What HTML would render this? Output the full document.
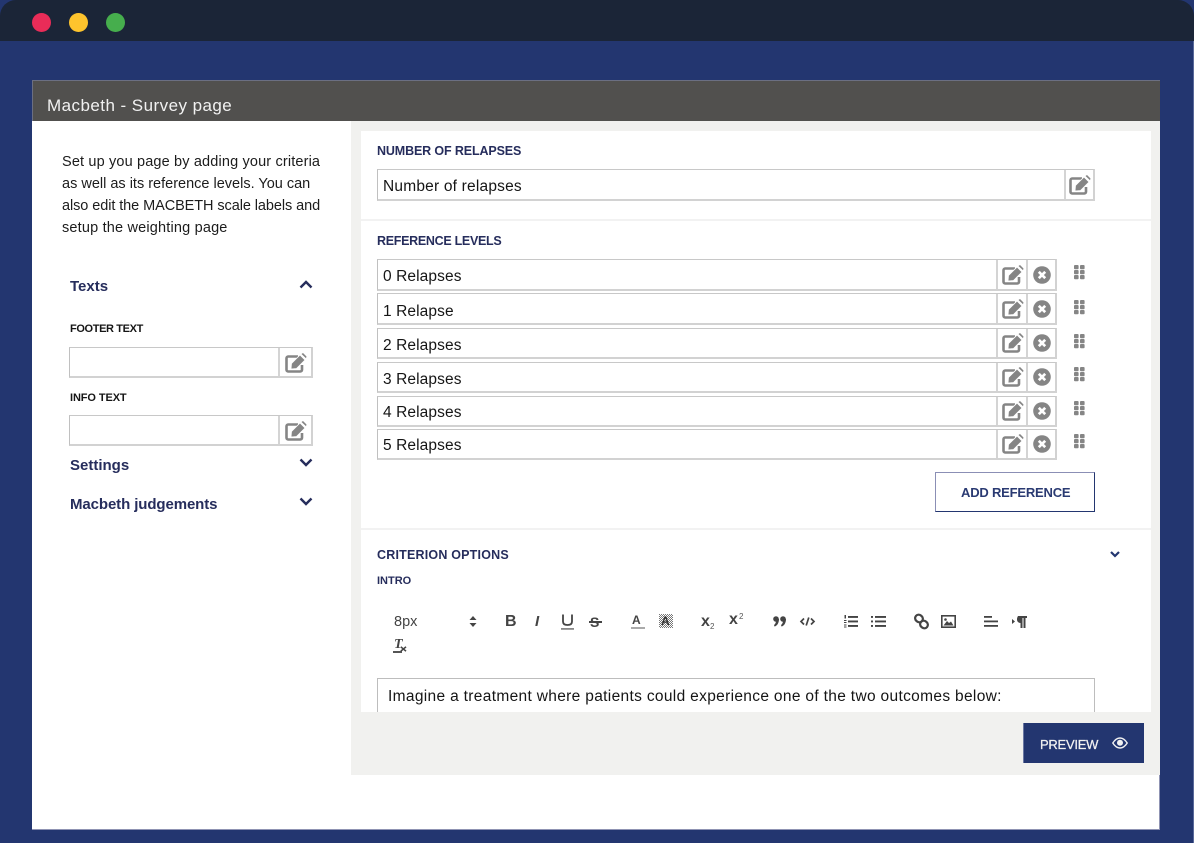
<!DOCTYPE html>
<html><head><meta charset="utf-8">
<style>
html,body{margin:0;padding:0;background:#fff}
#p{position:relative;width:1194px;height:843px;overflow:hidden;font-family:"Liberation Sans",sans-serif;background:#fff}
.a,.t{position:absolute}
.t{white-space:nowrap;line-height:20px}
.body{font-size:15.5px;letter-spacing:.1px;color:#151515}
.side{font-size:14.5px;color:#1c1c1c}
.head{font-size:12.5px;font-weight:bold;color:#262d5c}
.lab{font-size:11px;font-weight:bold;color:#151515}
.acc{font-size:15px;font-weight:bold;letter-spacing:0;color:#262d5c}
.box{position:absolute;box-sizing:border-box;border:solid #d2d2d2;border-width:1px 2px 2px 1px;border-top-color:#c8c8c8;border-left-color:#c0c0c0;background:#fff}
.sep{position:absolute;top:0;bottom:0;width:1.5px;background:#d4d4d4}
svg{position:absolute;overflow:visible}
</style></head><body><div id="p">
<svg width="0" height="0" style="position:absolute"><defs>
<g id="pen"><path d="M13 3.500H3.200A1.700 1.700 0 0 0 1.500 5.200V16.800A1.700 1.700 0 0 0 3.200 18.500H15.300A1.700 1.700 0 0 0 17 16.800V12" fill="none" stroke="#858585" stroke-width="2.600"/><path d="M6.500 10.500 15 2 20 7 11.500 15.500 6 16Z" fill="#858585" stroke="#fff" stroke-width=".8"/><path d="M16.500 1 18 0 21.500 3.500 21 5.300Z" fill="#858585"/></g>
<g id="x"><circle cx="9" cy="9" r="8.800" fill="#858585"/><path d="M5.800 5.800 12.200 12.200M12.200 5.800 5.800 12.200" stroke="#fff" stroke-width="2.700"/></g>
<g id="dots" fill="#858585"><rect x="0" y="0" width="4.600" height="4.300" rx="1"/><rect x="6" y="0" width="4.600" height="4.300" rx="1"/><rect x="0" y="5" width="4.600" height="4.300" rx="1"/><rect x="6" y="5" width="4.600" height="4.300" rx="1"/><rect x="0" y="10" width="4.600" height="4.300" rx="1"/><rect x="6" y="10" width="4.600" height="4.300" rx="1"/></g>
</defs></svg>

<div class="a" style="left:0;top:0;width:1194px;height:843px;background:#233670"></div>
<div class="a" style="left:1193px;top:41px;width:1px;height:802px;background:#5a6a9a"></div>
<div class="a" style="left:0;top:0;width:1194px;height:41px;background:#1b2537;border-radius:16px 16px 0 0"></div>
<div class="a" style="left:32px;top:13px;width:19px;height:19px;border-radius:50%;background:#e92c58"></div>
<div class="a" style="left:69px;top:13px;width:19px;height:19px;border-radius:50%;background:#fec42d"></div>
<div class="a" style="left:106px;top:13px;width:19px;height:19px;border-radius:50%;background:#46ae4d"></div>

<div class="a" style="left:32px;top:80px;width:1128px;height:41px;background:#51504e;box-shadow:inset 0 1px #6b6f82,inset 1px 0 #6b6f82"></div>
<div class="t" style="left:47px;top:96px;font-size:17px;letter-spacing:.45px;color:#f1f1f1">Macbeth - Survey page</div>
<div class="a" style="left:32px;top:121px;width:1128px;height:709px;box-sizing:border-box;background:#fff;border-right:1px solid #8f93b3;border-bottom:1px solid #8f93b3"></div>
<div class="a" style="left:351px;top:121px;width:809px;height:654px;background:#f1f1ef"></div>
<div class="a" style="left:361px;top:131px;width:790px;height:581px;background:#fff"></div>
<div class="a" style="left:361px;top:219px;width:790px;height:2px;background:#f2f2f2"></div>
<div class="a" style="left:361px;top:528px;width:790px;height:2px;background:#f2f2f2"></div>

<!-- Sidebar -->
<div class="t side" style="left:62px;top:152px;letter-spacing:.15px">Set up you page by adding your criteria</div>
<div class="t side" style="left:62px;top:174px">as well as its reference levels. You can</div>
<div class="t side" style="left:62px;top:196px;letter-spacing:-.08px">also edit the MACBETH scale labels and</div>
<div class="t side" style="left:62px;top:218px;letter-spacing:.18px">setup the weighting page</div>

<div class="t acc" style="left:70px;top:277px">Texts</div>
<svg style="left:299px;top:280px" width="14" height="9"><path d="M1.500 7.500 7 2 12.500 7.500" fill="none" stroke="#262d5c" stroke-width="2.400"/></svg>
<div class="t lab" style="left:70px;top:319px;letter-spacing:-.37px">FOOTER TEXT</div>
<div class="box" style="left:69px;top:347px;width:244px;height:31px"><div class="sep" style="left:208px"></div></div>
<svg style="left:285px;top:353px" width="22" height="20"><use href="#pen"/></svg>
<div class="t lab" style="left:70px;top:388px;letter-spacing:-.1px">INFO TEXT</div>
<div class="box" style="left:69px;top:415px;width:244px;height:31px"><div class="sep" style="left:208px"></div></div>
<svg style="left:285px;top:421px" width="22" height="20"><use href="#pen"/></svg>
<div class="t acc" style="left:70px;top:456px">Settings</div>
<svg style="left:299px;top:458px" width="14" height="9"><path d="M1.500 1.500 7 7 12.500 1.500" fill="none" stroke="#262d5c" stroke-width="2.400"/></svg>
<div class="t acc" style="left:70px;top:495px;letter-spacing:-.1px">Macbeth judgements</div>
<svg style="left:299px;top:497px" width="14" height="9"><path d="M1.500 1.500 7 7 12.500 1.500" fill="none" stroke="#262d5c" stroke-width="2.400"/></svg>

<!-- Number of relapses -->
<div class="t head" style="left:377px;top:141px;letter-spacing:-.13px">NUMBER OF RELAPSES</div>
<div class="box" style="left:377px;top:169px;width:718px;height:32px"><div class="sep" style="left:686px"></div></div>
<div class="t body" style="left:383px;top:177px;letter-spacing:.2px">Number of relapses</div>
<svg style="left:1069px;top:175px" width="22" height="20"><use href="#pen"/></svg>

<!-- Reference levels -->
<div class="t head" style="left:377px;top:231px;letter-spacing:-.3px">REFERENCE LEVELS</div>

<div class="box" style="left:377px;top:259px;width:680px;height:32px"><div class="sep" style="left:618px"></div><div class="sep" style="left:648px"></div></div>
<div class="t body" style="left:383px;top:267px">0 Relapses</div>
<svg style="left:1002px;top:265px" width="22" height="20"><use href="#pen"/></svg>
<svg style="left:1033px;top:266px" width="18" height="18"><use href="#x"/></svg>
<svg style="left:1074px;top:265px" width="11" height="14"><use href="#dots"/></svg>

<div class="box" style="left:377px;top:293px;width:680px;height:32px"><div class="sep" style="left:618px"></div><div class="sep" style="left:648px"></div></div>
<div class="t body" style="left:383px;top:302px">1 Relapse</div>
<svg style="left:1002px;top:299px" width="22" height="20"><use href="#pen"/></svg>
<svg style="left:1033px;top:300px" width="18" height="18"><use href="#x"/></svg>
<svg style="left:1074px;top:300px" width="11" height="14"><use href="#dots"/></svg>

<div class="box" style="left:377px;top:328px;width:680px;height:31px"><div class="sep" style="left:618px"></div><div class="sep" style="left:648px"></div></div>
<div class="t body" style="left:383px;top:336px">2 Relapses</div>
<svg style="left:1002px;top:333px" width="22" height="20"><use href="#pen"/></svg>
<svg style="left:1033px;top:334px" width="18" height="18"><use href="#x"/></svg>
<svg style="left:1074px;top:334px" width="11" height="14"><use href="#dots"/></svg>

<div class="box" style="left:377px;top:362px;width:680px;height:31px"><div class="sep" style="left:618px"></div><div class="sep" style="left:648px"></div></div>
<div class="t body" style="left:383px;top:370px">3 Relapses</div>
<svg style="left:1002px;top:367px" width="22" height="20"><use href="#pen"/></svg>
<svg style="left:1033px;top:368px" width="18" height="18"><use href="#x"/></svg>
<svg style="left:1074px;top:367px" width="11" height="14"><use href="#dots"/></svg>

<div class="box" style="left:377px;top:396px;width:680px;height:31px"><div class="sep" style="left:618px"></div><div class="sep" style="left:648px"></div></div>
<div class="t body" style="left:383px;top:403px">4 Relapses</div>
<svg style="left:1002px;top:401px" width="22" height="20"><use href="#pen"/></svg>
<svg style="left:1033px;top:402px" width="18" height="18"><use href="#x"/></svg>
<svg style="left:1074px;top:401px" width="11" height="14"><use href="#dots"/></svg>

<div class="box" style="left:377px;top:429px;width:680px;height:31px"><div class="sep" style="left:618px"></div><div class="sep" style="left:648px"></div></div>
<div class="t body" style="left:383px;top:436px">5 Relapses</div>
<svg style="left:1002px;top:434px" width="22" height="20"><use href="#pen"/></svg>
<svg style="left:1033px;top:435px" width="18" height="18"><use href="#x"/></svg>
<svg style="left:1074px;top:434px" width="11" height="14"><use href="#dots"/></svg>

<div class="a" style="left:935px;top:472px;width:160px;height:40px;box-sizing:border-box;border:1px solid #233670;border-top:1.5px solid #8b8fb5;border-left:1.5px solid #8b8fb5"></div>
<div class="t" style="left:961px;top:483px;font-size:13px;font-weight:bold;letter-spacing:-.2px;color:#2a3a72">ADD REFERENCE</div>

<!-- Criterion options -->
<div class="t head" style="left:377px;top:545px;letter-spacing:.2px">CRITERION OPTIONS</div>
<svg style="left:1110px;top:551px" width="10" height="7"><path d="M1 1 5 5 9 1" fill="none" stroke="#233670" stroke-width="2.200"/></svg>
<div class="t lab" style="left:377px;top:571px;color:#262d5c">INTRO</div>

<!-- Toolbar -->
<div class="t" style="left:394px;top:612px;font-size:14.500px;color:#444">8px</div>
<svg style="left:469px;top:616px" width="8" height="11"><path d="M4 0 7.500 4H.5ZM4 11 .5 7H7.500Z" fill="#444"/></svg>
<div class="t" style="left:505px;top:612px;font-size:16px;font-weight:bold;color:#444">B</div>
<div class="t" style="left:535px;top:612px;font-size:15px;font-weight:bold;font-style:italic;color:#444">I</div>
<svg style="left:561px;top:614px" width="13" height="16"><path d="M2 .5V7.500C2 10 4 11 6.500 11S11 10 11 7.500V.5" fill="none" stroke="#444" stroke-width="1.800"/><rect x="0" y="14" width="13" height="1.800" fill="#888"/></svg>
<div class="t" style="left:590px;top:612px;font-size:14px;font-weight:bold;color:#444">S</div>
<div class="a" style="left:589px;top:621px;width:13px;height:1.500px;background:#444"></div>
<div class="t" style="left:632px;top:610px;font-size:12px;font-weight:bold;color:#444">A</div>
<div class="a" style="left:631px;top:627px;width:14px;height:2px;background:#aaa"></div>
<svg style="left:659px;top:614px" width="14" height="14"><defs><pattern id="h" width="2" height="2" patternUnits="userSpaceOnUse"><rect width="1" height="1" fill="#777"/><rect x="1" y="1" width="1" height="1" fill="#777"/></pattern></defs><rect width="14" height="14" fill="url(#h)"/></svg>
<div class="t" style="left:661px;top:611px;font-size:12px;font-weight:bold;color:#333">A</div>
<div class="t" style="left:701px;top:612px;font-size:16px;font-weight:bold;color:#444">x</div>
<div class="t" style="left:710px;top:617px;font-size:8px;color:#555">2</div>
<div class="t" style="left:729px;top:610px;font-size:16px;font-weight:bold;color:#444">x</div>
<div class="t" style="left:739px;top:607px;font-size:8px;color:#555">2</div>
<svg style="left:773px;top:616px" width="13" height="11" fill="#444"><circle cx="3" cy="3" r="2.800"/><path d="M3 3H6C6 7 4 10 1.500 10.500L1 9C2.500 8 3 6 3 5Z"/><circle cx="10" cy="3" r="2.800"/><path d="M10 3H13C13 7 11 10 8.500 10.500L8 9C9.500 8 10 6 10 5Z"/></svg>
<svg style="left:800px;top:617px" width="15" height="9" fill="none" stroke="#444" stroke-width="1.700"><path d="M4 1.500 1 4.500 4 7.500M11 1.500 14 4.500 11 7.500M8.800 .5 6.200 8.500"/></svg>
<svg style="left:843px;top:615px" width="15" height="13" fill="#444"><rect x="5" y="1" width="10" height="1.900"/><rect x="5" y="5.500" width="10" height="1.900"/><rect x="5" y="10" width="10" height="1.900"/><rect x="1.500" y="0" width="1.500" height="3.500"/><rect x="1" y="5" width="2.500" height="1"/><rect x="1" y="7" width="2.500" height="1"/><rect x="1" y="9.500" width="2.500" height="1"/><rect x="1" y="11.500" width="2.500" height="1"/></svg>
<svg style="left:871px;top:615px" width="15" height="13" fill="#444"><rect x="4" y="1" width="11" height="1.900"/><rect x="4" y="5.500" width="11" height="1.900"/><rect x="4" y="10" width="11" height="1.900"/><rect x="0" y="1" width="2" height="1.900"/><rect x="0" y="5.500" width="2" height="1.900"/><rect x="0" y="10" width="2" height="1.900"/></svg>
<svg style="left:914px;top:614px" width="15" height="15" fill="none" stroke="#444" stroke-width="2.200"><rect x="1" y="1" width="8" height="7" rx="3.500" transform="rotate(40 5 4.500)"/><rect x="6" y="7" width="8" height="7" rx="3.500" transform="rotate(40 10 10.500)"/></svg>
<svg style="left:941px;top:615px" width="15" height="13"><rect x=".8" y=".8" width="13.400" height="11.400" fill="none" stroke="#444" stroke-width="1.600"/><path d="M2.500 10.500 6 6 8 8 10 6.500 12.500 10.500Z" fill="#444"/><circle cx="4.500" cy="4.500" r="1.300" fill="#444"/></svg>
<svg style="left:984px;top:615px" width="15" height="13" fill="#444"><rect x="0" y="1" width="8" height="1.800"/><rect x="0" y="5.500" width="14" height="1.800"/><rect x="0" y="10" width="14" height="1.800"/></svg>
<svg style="left:1012px;top:615px" width="15" height="13" fill="#444"><path d="M0 4 3 6.500 0 9Z"/><path d="M6 1H15V3H13.500V13H11.500V3H10.500V13H8.500V8C6.500 8 5 6.500 5 4.500S6 1 6 1Z"/></svg>
<div class="t" style="left:394px;top:635px;font-size:14px;font-weight:bold;font-style:italic;font-family:'Liberation Serif',serif;color:#444">T</div>
<div class="a" style="left:393px;top:651px;width:9px;height:1.500px;background:#555"></div>
<svg style="left:400px;top:646px" width="7" height="6"><path d="M.8.8 6 5.200M6 .8.8 5.200" stroke="#444" stroke-width="1.600"/></svg>

<div class="a" style="left:377px;top:678px;width:718px;height:34px;box-sizing:border-box;border:1px solid #bdbdbd;border-bottom:0;background:#fff"></div>
<div class="t body" style="left:388px;top:687px;letter-spacing:.33px">Imagine a treatment where patients could experience one of the two outcomes below:</div>

<!-- Preview -->
<div class="a" style="left:1023px;top:723px;width:121px;height:40px;box-sizing:border-box;background:#233670;border-left:1px solid #6b78a3"></div>
<div class="t" style="left:1040px;top:735px;font-size:13px;letter-spacing:-.25px;color:#f2f2f2;-webkit-text-stroke:.25px #f2f2f2">PREVIEW</div>
<svg style="left:1112px;top:737px" width="16" height="12"><path d="M.8 6C3 2.500 5.500 1 8 1S13 2.500 15.200 6C13 9.500 10.500 11 8 11S3 9.500 .8 6Z" fill="none" stroke="#f2f2f2" stroke-width="1.400"/><circle cx="8" cy="5.800" r="3" fill="#f2f2f2"/></svg>
</div></body></html>
